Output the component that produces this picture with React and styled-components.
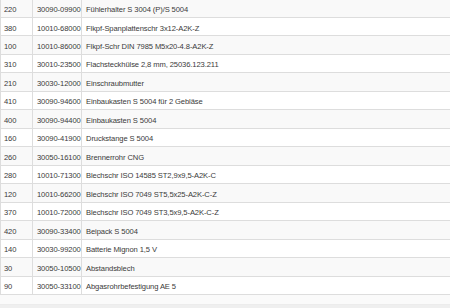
import React from "react";
import styled, { createGlobalStyle } from "styled-components";

const GlobalStyle = createGlobalStyle`
  html, body {
    margin: 0;
    padding: 0;
    background: #fff;
    overflow: hidden;
  }
`;

const Wrapper = styled.div`
  width: 450px;
  height: 308px;
  display: flex;
  flex-direction: column;
  overflow: hidden;
  font-family: "Liberation Sans", Arial, sans-serif;
  font-size: 7.6px;
  letter-spacing: -0.1px;
  color: #3a3a3a;
`;

const Table = styled.div`
  margin-top: -0.47px;
  border-left: 1px solid #ddd;
`;

const Row = styled.div`
  display: grid;
  grid-template-columns: 31px 49px 1fr;
  height: 18.47px;
  box-sizing: border-box;
  border-bottom: 1px solid #ddd;
  background: ${(p) => (p.striped ? "#f9f9f9" : "#fff")};
`;

const Cell = styled.div`
  padding: 2.5px 0 0 ${(p) => (p.first ? "3px" : "4px")};
  line-height: 15px;
  white-space: nowrap;
  overflow: hidden;
  border-left: ${(p) => (p.first ? "none" : "1px solid #ddd")};
`;

const Footer = styled.div`
  height: 9px;
  background: #fafafa;
  border-bottom: 1px solid #ececec;
`;

const Bottom = styled.div`
  flex: 1;
  background: #efefef;
`;

const parts = [
  ["220", "30090-09900", "Fühlerhalter S 3004 (P)/S 5004"],
  ["380", "10010-68000", "Flkpf-Spanplattenschr 3x12-A2K-Z"],
  ["100", "10010-86000", "Flkpf-Schr DIN 7985 M5x20-4.8-A2K-Z"],
  ["310", "30010-23500", "Flachsteckhülse 2,8 mm, 25036.123.211"],
  ["210", "30030-12000", "Einschraubmutter"],
  ["410", "30090-94600", "Einbaukasten S 5004 für 2 Gebläse"],
  ["400", "30090-94400", "Einbaukasten S 5004"],
  ["160", "30090-41900", "Druckstange S 5004"],
  ["260", "30050-16100", "Brennerrohr CNG"],
  ["280", "10010-71300", "Blechschr ISO 14585 ST2,9x9,5-A2K-C"],
  ["120", "10010-66200", "Blechschr ISO 7049 ST5,5x25-A2K-C-Z"],
  ["370", "10010-72000", "Blechschr ISO 7049 ST3,5x9,5-A2K-C-Z"],
  ["420", "30090-33400", "Beipack S 5004"],
  ["140", "30030-99200", "Batterie Mignon 1,5 V"],
  ["30", "30050-10500", "Abstandsblech"],
  ["90", "30050-33100", "Abgasrohrbefestigung AE 5"],
];

export default function App() {
  return (
    <>
      <GlobalStyle />
      <Wrapper>
        <Table>
          {parts.map(([pos, nr, name], i) => (
            <Row key={nr} striped={i % 2 === 0}>
              <Cell first>{pos}</Cell>
              <Cell>{nr}</Cell>
              <Cell>{name}</Cell>
            </Row>
          ))}
        </Table>
        <Footer />
        <Bottom />
      </Wrapper>
    </>
  );
}
